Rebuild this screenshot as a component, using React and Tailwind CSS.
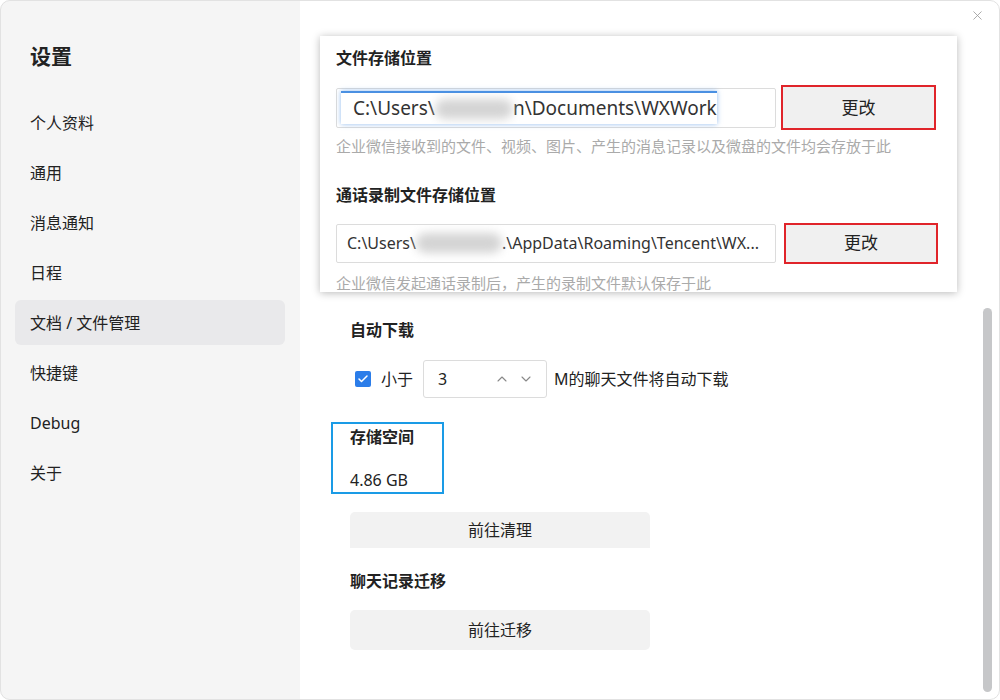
import { Check, ChevronUp, ChevronDown, X } from "lucide-react";

const navItems = ["个人资料", "通用", "消息通知", "日程", "文档 / 文件管理", "快捷键", "Debug", "关于"];

function Blur({ w }) {
    return <span className={`inline-block h-[20px] ${w} rounded-full bg-[#d4d4d4] blur-[5px] align-middle`} />;
}

export default function App() {
    return (
        <div className="w-[1000px] h-[700px] flex overflow-hidden rounded-[10px] outline outline-[#e2e2e2] -outline-offset-1 bg-white text-[#222] font-['Noto_Sans','Noto_Sans_CJK_SC',sans-serif]">
            <aside className="w-[300px] shrink-0 bg-[#f5f5f5] flex flex-col">
                <h1 className="mt-[41px] ml-[30px] text-[21px] leading-[30px] font-bold">设置</h1>
                <nav className="mt-[29px] mx-[15px] flex flex-col">
                    {navItems.map((item, i) => (
                        <div
                            key={item}
                            className={`h-[45px] mb-[5px] px-[15px] flex items-center rounded-[6px] text-[16px] ${i === 4 ? "bg-[#e9e9eb]" : ""}`}
                        >
                            {item}
                        </div>
                    ))}
                </nav>
            </aside>

            <main className="relative flex-1 flex flex-col">
                <X className="absolute right-[15px] top-[8px] w-[15px] h-[15px] text-[#999]" strokeWidth={1.3} />
                <div className="absolute right-[8px] top-[308px] w-[9px] h-[384px] rounded-full bg-[#c6c7c9]" />

                {/* magnified card */}
                <div className="ml-[20px] mt-[36px] w-[637px] h-[256px] overflow-hidden bg-white px-[16px] shadow-[0_1px_8px_rgba(0,0,0,0.28)]">
                    <h2 className="mt-[11px] text-[16px] leading-[22px] font-bold">文件存储位置</h2>
                    <div className="mt-[16px] flex items-center gap-[5px] h-[45px]">
                        <div className="w-[440px] h-[40px] border border-[#dcdcdc] rounded-[2px] flex items-center px-[4px]">
                            <div className="w-[376px] h-[33px] border-t-2 border-[#4a90e2] shadow-[0_0_5px_rgba(74,144,226,0.6)] flex items-center pl-[12px] text-[19px] text-[#333] whitespace-nowrap overflow-hidden">
                                C:\Users\<Blur w="w-[78px]" />n\Documents\WXWork
                            </div>
                        </div>
                        <button className="w-[155px] h-[45px] bg-[#f0f0f0] border-2 border-[#e0242a] text-[17px]">更改</button>
                    </div>
                    <p className="mt-[6px] text-[15px] leading-[20px] text-[#aaaaaa]">企业微信接收到的文件、视频、图片、产生的消息记录以及微盘的文件均会存放于此</p>

                    <h2 className="mt-[28px] text-[16px] leading-[22px] font-bold">通话录制文件存储位置</h2>
                    <div className="mt-[16px] flex items-center gap-[8px] h-[42px]">
                        <div className="w-[440px] h-[39px] border border-[#dcdcdc] rounded-[2px] flex items-center pl-[10px] text-[16px] text-[#333] whitespace-nowrap overflow-hidden">
                            C:\Users\<Blur w="w-[86px]" />.\AppData\Roaming\Tencent\WX...
                        </div>
                        <button className="w-[154px] h-[41px] bg-[#f0f0f0] border-2 border-[#e0242a] text-[17px]">更改</button>
                    </div>
                    <p className="mt-[9px] text-[15px] leading-[20px] text-[#aaaaaa]">企业微信发起通话录制后，产生的录制文件默认保存于此</p>
                </div>

                <div className="pl-[50px] flex flex-col">
                    <h3 className="mt-[27px] text-[16px] leading-[22px] font-bold">自动下载</h3>
                    <div className="mt-[19px] flex items-center h-[38px] text-[16px]">
                        <span className="ml-[5px] w-[16px] h-[16px] rounded-[2px] bg-[#2b7de9] flex items-center justify-center">
                            <Check className="w-[12px] h-[12px] text-white" strokeWidth={3} />
                        </span>
                        <span className="ml-[10px]">小于</span>
                        <div className="ml-[10px] w-[124px] h-[38px] border border-[#dcdcdc] rounded-[3px] flex items-center pl-[14px] pr-[12px]">
                            <span className="flex-1">3</span>
                            <ChevronUp className="w-[16px] h-[16px] text-[#888]" strokeWidth={1.6} />
                            <ChevronDown className="ml-[8px] w-[16px] h-[16px] text-[#888]" strokeWidth={1.6} />
                        </div>
                        <span className="ml-[7px]">M的聊天文件将自动下载</span>
                    </div>

                    <div className="mt-[24px] -ml-[19px] w-[113px] h-[72px] border-2 border-[#1a9be6] pl-[17px] flex flex-col">
                        <h3 className="mt-[2px] text-[16px] leading-[22px] font-bold">存储空间</h3>
                        <span className="mt-[21px] text-[16px] leading-[22px]">4.86 GB</span>
                    </div>

                    <button className="mt-[18px] w-[300px] h-[36px] rounded-t-[5px] bg-[#f2f2f2] text-[16px]">前往清理</button>

                    <h3 className="mt-[22px] text-[16px] leading-[22px] font-bold">聊天记录迁移</h3>
                    <button className="mt-[18px] w-[300px] h-[40px] rounded-[5px] bg-[#f2f2f2] text-[16px]">前往迁移</button>
                </div>
            </main>
        </div>
    );
}
